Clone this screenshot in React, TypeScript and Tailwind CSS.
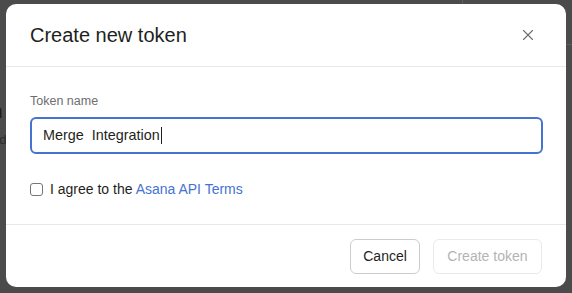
import { X } from 'lucide-react';

function BackgroundPage() {
  // faint page content that shows at the left edge behind the dimmed overlay
  return (
    <div className="relative h-[293px] w-[572px] overflow-hidden bg-[#4b4b4b]">
      <div className="absolute left-[-14px] top-[96px] text-[20px] font-medium text-[#1d1d1d]">
        In
      </div>
      <div className="absolute left-[-8px] top-[130px] text-[13px] text-[#2c2c2c]">
        ad
      </div>
      <div className="absolute left-[-6px] top-[192px] text-[14px] text-[#222]">
        li
      </div>
      <div className="absolute left-[462px] top-0 h-[4px] w-px bg-[#5c5c5c]" />
      <div className="absolute left-[566px] top-[44px] h-px w-[6px] bg-[#5c5c5c]" />
    </div>
  );
}

export default function App() {
  return (
    <div
      className="relative h-[293px] w-[572px] overflow-hidden"
      style={{ fontFamily: '"Liberation Sans", Arial, sans-serif' }}
    >
      <BackgroundPage />

      {/* Modal */}
      <div className="absolute left-[6px] top-[4px] flex h-[283px] w-[560px] flex-col rounded-[10px] bg-white">
        {/* Header */}
        <div className="flex h-[63px] items-center justify-between border-b border-[#e8e8e8] pl-6 pr-[28px]">
          <h2 className="text-[20px] leading-6 text-[#1e1f21]">Create new token</h2>
          <button className="flex h-5 w-5 items-center justify-center text-[#6d6e6f]">
            <X className="h-[18px] w-[18px]" strokeWidth={1.5} />
          </button>
        </div>

        {/* Body */}
        <div className="flex flex-1 flex-col px-6 pt-[26px]">
          <label className="text-[12.5px] leading-4 text-[#6d6e6f]">Token name</label>
          <div className="mt-[8px] flex h-[37px] w-[513px] items-center rounded-[6px] border-2 border-[#4573d2] px-[11px]">
            <span className="whitespace-pre text-[14.4px] text-[#1e1f21]">Merge  Integration</span>
            <span className="ml-px h-[17px] w-px bg-[#1e1f21]" />
          </div>
          <div className="mt-[25px] flex h-5 items-center gap-[7px]">
            <span className="h-[13px] w-[13px] rounded-[3px] border border-[#767676] bg-white" />
            <span className="text-[14px] text-[#1e1f21]">
              I agree to the <span className="text-[#4573d2]">Asana API Terms</span>
            </span>
          </div>
        </div>

        {/* Footer */}
        <div className="flex h-[63px] items-center justify-end gap-[13px] border-t border-[#e8e8e8] pr-6">
          <button className="h-[35px] rounded-[6px] border border-[#cfcbcb] px-3 text-[14px] text-[#1e1f21]">
            Cancel
          </button>
          <button className="h-[35px] rounded-[6px] border border-[#ebeaea] px-[13.5px] text-[14px] text-[#b4b3b3]">
            Create token
          </button>
        </div>
      </div>
    </div>
  );
}
